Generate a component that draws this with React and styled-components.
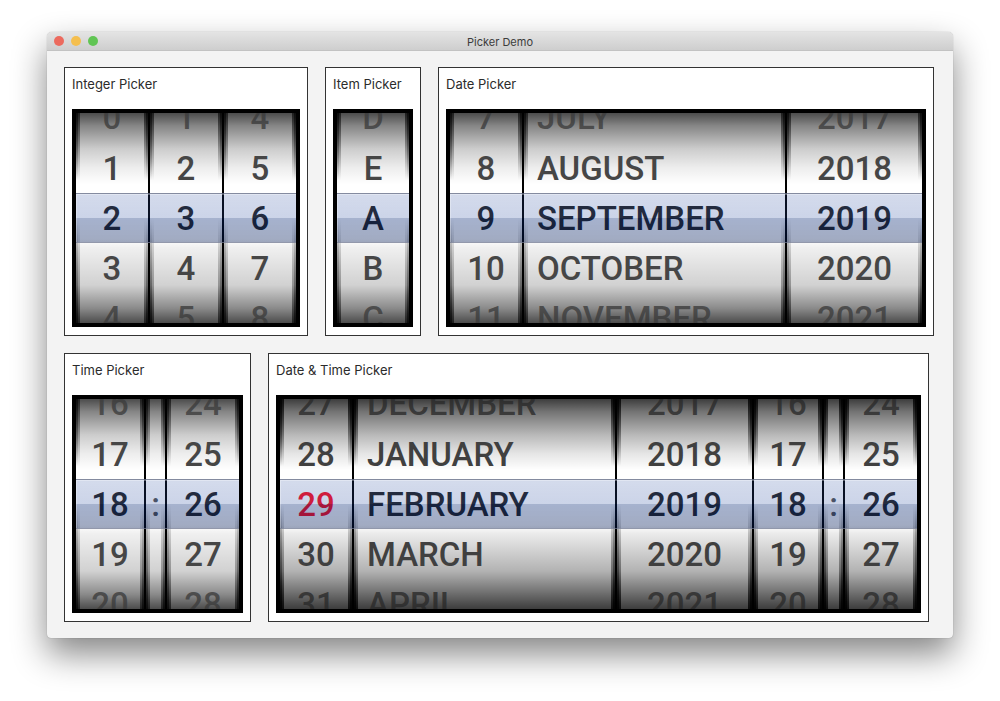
import React from "react";
import styled, { createGlobalStyle } from "styled-components";

const Global = createGlobalStyle`
  * { box-sizing: border-box; }
  body { margin: 0; background: #fff; font-family: Inter, "Liberation Sans", sans-serif; }
`;

const Desktop = styled.main`
  padding: 32px 47px 62px;
`;

const Window = styled.section`
  background: #f3f3f3;
  border-radius: 5px 5px 4px 4px;
  box-shadow: 0 0 1px rgba(0, 0, 0, 0.4), 0 16px 34px rgba(0, 0, 0, 0.48);
`;

const TitleBar = styled.header`
  display: grid;
  grid-template-columns: 1fr auto 1fr;
  align-items: end;
  height: 19px;
  padding: 0 7px;
  border-radius: 5px 5px 0 0;
  border-bottom: 1px solid #c2c2c2;
  background: linear-gradient(#e4e4e4, #cecece);
`;

const Lights = styled.div`
  display: flex;
  align-self: center;
  gap: 7px;
`;

const Light = styled.button`
  width: 10px;
  height: 10px;
  padding: 0;
  border: 0;
  border-radius: 50%;
  background: ${(p) => p.$color};
`;

const Title = styled.h1`
  margin: 0;
  font-size: 11px;
  line-height: 16px;
  font-weight: 400;
  color: #3c3c3c;
`;

const Content = styled.div`
  display: flex;
  flex-direction: column;
  gap: 17px;
  padding: 16px 17px;
`;

const PanelRow = styled.div`
  display: flex;
  gap: 17px;
`;

const Panel = styled.section`
  padding: 7px 7px 8px;
  border: 1px solid #333;
  background: #fff;
`;

const PanelTitle = styled.h2`
  margin: 0 0 16px;
  font-size: 13px;
  line-height: 18px;
  font-weight: 400;
  color: #2b2b2b;
  white-space: nowrap;
`;

const Frame = styled.div`
  position: relative;
  display: flex;
  gap: 2px;
  height: 218px;
  border: 4px solid #000;
  background: #000;
`;

const edge = (side, size, alpha) =>
  `linear-gradient(rgba(0,0,0,${alpha}), rgba(0,0,0,${alpha / 2}) 17%, rgba(0,0,0,0) 32%, rgba(0,0,0,0) 50%, rgba(0,0,0,${alpha / 4}) 64%, rgba(0,0,0,${alpha / 2}) 82%, rgba(0,0,0,${alpha})) ${side} / ${size}px 100% no-repeat`;

const edges = (alpha) =>
  [
    edge("left", 4, alpha),
    edge("right", 4, alpha),
    edge("left", 2, alpha),
    edge("right", 2, alpha),
  ].join(",");

const shade = `${edges(0.6)}, linear-gradient(rgba(0,0,0,.7), rgba(0,0,0,.48) 6%, rgba(0,0,0,.2) 17%, rgba(0,0,0,.07) 26%, rgba(0,0,0,0) 34%, rgba(0,0,0,0) 60%, rgba(0,0,0,.06) 64%, rgba(0,0,0,.18) 82%, rgba(0,0,0,.46) 93%, rgba(0,0,0,.7)), #fff`;
const deepShade = `${edges(0.8)}, linear-gradient(rgba(0,0,0,.76), rgba(0,0,0,.55) 6%, rgba(0,0,0,.28) 17%, rgba(0,0,0,.1) 26%, rgba(0,0,0,0) 34%, rgba(0,0,0,0) 60%, rgba(0,0,0,.08) 64%, rgba(0,0,0,.3) 82%, rgba(0,0,0,.58) 93%, rgba(0,0,0,.76)), #fff`;

const Wheel = styled.ul`
  display: grid;
  grid-template-rows: 51px 50px 50px 50px 51px;
  align-content: center;
  width: ${(p) => p.$width}px;
  margin: 0;
  padding: 0;
  overflow: hidden;
  list-style: none;
  background: ${(p) => (p.$deep ? deepShade : shade)};
  font-family: Roboto, "Liberation Sans", sans-serif;
  font-size: 33px;
  font-weight: 500;
  color: ${(p) => (p.$deep ? "#404040" : "#464646")};
`;

const tones = {
  selected: "#222",
  alert: "#ff1020",
  muted: "#555",
  outer: "rgba(60, 60, 60, 0.8)",
  outerDeep: "rgba(42, 42, 42, 0.8)",
};

const Item = styled.li`
  display: flex;
  align-items: center;
  justify-content: ${(p) => (p.$left ? "flex-start" : "center")};
  padding-left: ${(p) => (p.$left ? 13 : 0)}px;
  white-space: nowrap;
  color: ${(p) => tones[p.$tone] || "inherit"};
`;

const Band = styled.div`
  position: absolute;
  top: 80px;
  left: 0;
  right: 0;
  height: 50px;
  border-top: 1px solid rgba(120, 125, 145, 0.7);
  border-bottom: 1px solid rgba(120, 125, 145, 0.7);
  box-shadow: inset 1px 1px rgba(255, 255, 255, 0.3);
  background: linear-gradient(
    rgba(40, 75, 160, 0.2),
    rgba(40, 75, 160, 0.24) 50%,
    rgba(0, 35, 115, 0.35) 50%,
    rgba(0, 25, 85, 0.37)
  );
`;

const day = (items, alert) => ({ width: 72, items, tone: alert ? "alert" : undefined });
const month = (items) => ({ width: 261, items, left: true });
const year = { width: 135, items: [2017, 2018, 2019, 2020, 2021] };
const hour = { width: 68, items: [16, 17, 18, 19, 20] };
const colon = { width: 19, items: ["", "", ":", "", ""], tone: "muted" };
const minute = { width: 72, items: [24, 25, 26, 27, 28] };

const rows = [
  [
    {
      title: "Integer Picker",
      wheels: [day([0, 1, 2, 3, 4]), day([1, 2, 3, 4, 5]), day([4, 5, 6, 7, 8])],
    },
    { title: "Item Picker", wheels: [day(["D", "E", "A", "B", "C"])] },
    {
      title: "Date Picker",
      wheels: [
        day([7, 8, 9, 10, 11]),
        month(["JULY", "AUGUST", "SEPTEMBER", "OCTOBER", "NOVEMBER"]),
        year,
      ],
    },
  ],
  [
    { title: "Time Picker", wheels: [hour, colon, minute] },
    {
      title: "Date & Time Picker",
      deep: true,
      wheels: [
        day([27, 28, 29, 30, 31], true),
        month(["DECEMBER", "JANUARY", "FEBRUARY", "MARCH", "APRIL"]),
        year,
        hour,
        colon,
        minute,
      ],
    },
  ],
];

function toneOf(index, wheel, deep) {
  if (index === 2) return wheel.tone || "selected";
  if (index === 0 || index === 4) return deep ? "outerDeep" : "outer";
  return undefined;
}

function Picker({ title, wheels, deep }) {
  return (
    <Panel>
      <PanelTitle>{title}</PanelTitle>
      <Frame>
        {wheels.map((w, i) => (
          <Wheel key={i} $width={w.width} $deep={deep}>
            {w.items.map((item, n) => (
              <Item key={n} $left={w.left} $tone={toneOf(n, w, deep)}>
                {item}
              </Item>
            ))}
          </Wheel>
        ))}
        <Band />
      </Frame>
    </Panel>
  );
}

export default function App() {
  return (
    <Desktop>
      <Global />
      <Window>
        <TitleBar>
          <Lights>
            <Light $color="#ec6a5e" aria-label="Close" />
            <Light $color="#f5bf4f" aria-label="Minimize" />
            <Light $color="#61c554" aria-label="Zoom" />
          </Lights>
          <Title>Picker Demo</Title>
        </TitleBar>
        <Content>
          {rows.map((row, i) => (
            <PanelRow key={i}>
              {row.map((p) => (
                <Picker key={p.title} {...p} />
              ))}
            </PanelRow>
          ))}
        </Content>
      </Window>
    </Desktop>
  );
}
